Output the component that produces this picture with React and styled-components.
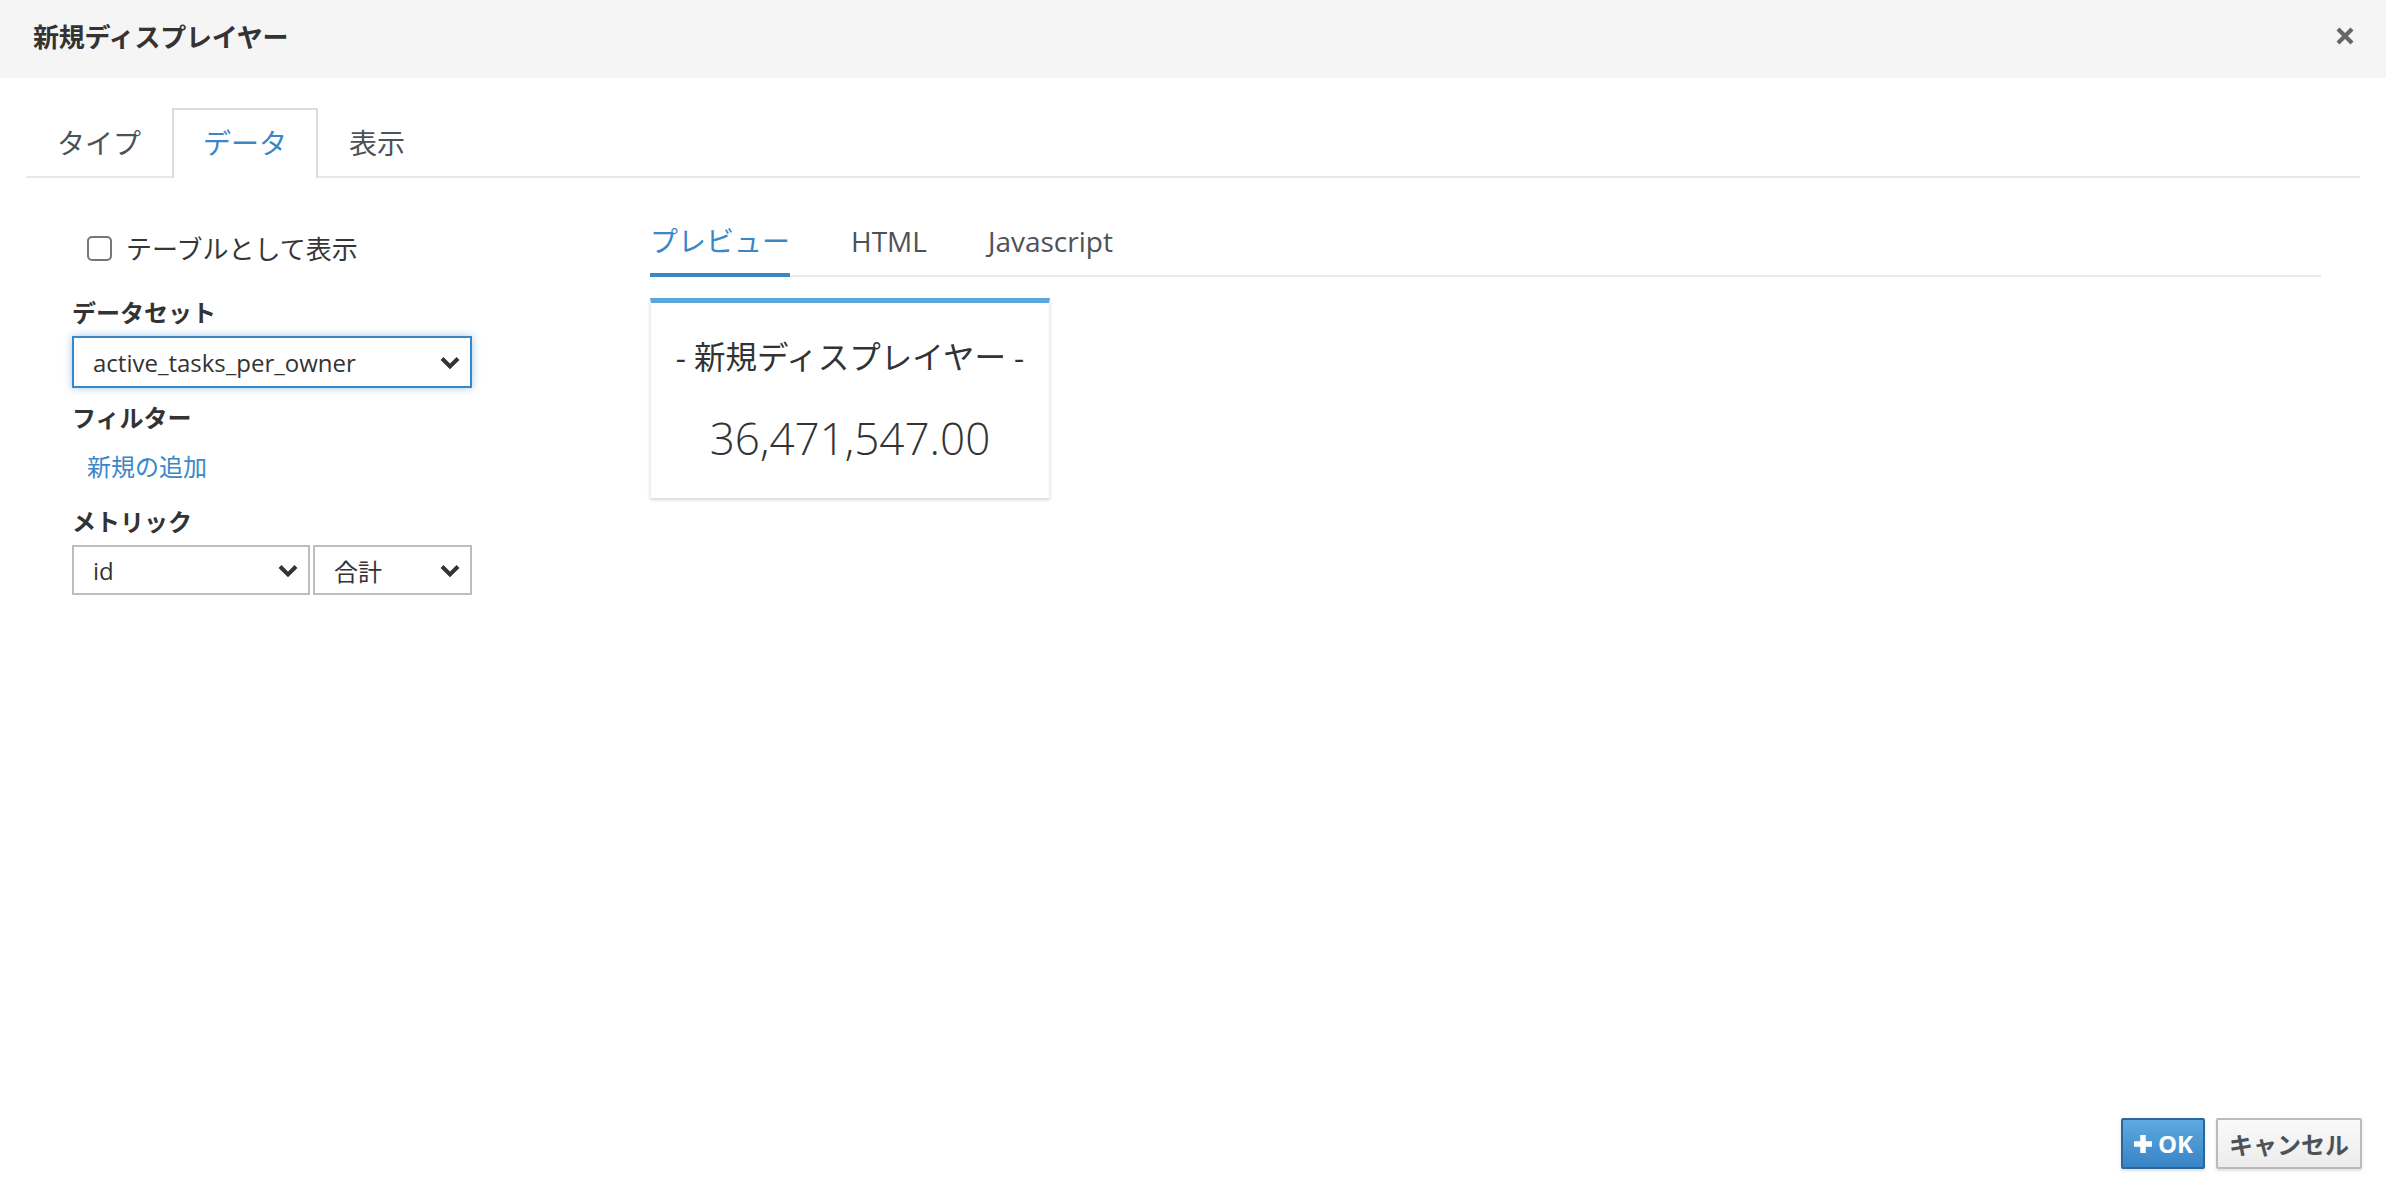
import React from "react";
import styled, { createGlobalStyle } from "styled-components";

const GlobalStyle = createGlobalStyle`
  html, body { margin: 0; padding: 0; background: #fff; }
  body {
    font-family: "Open Sans", "Noto Sans CJK JP", sans-serif;
    color: #333;
  }
  * { box-sizing: border-box; }
`;

const Page = styled.div`
  width: 100%;
  height: 100vh;
  display: flex;
  flex-direction: column;
`;

const Header = styled.div`
  height: 78px;
  background: #f5f5f5;
  display: flex;
  align-items: center;
  justify-content: space-between;
  padding: 0 31px 6px 33px;
`;

const Title = styled.h4`
  margin: 0;
  font-size: 26px;
  font-weight: 700;
  color: #333;
  letter-spacing: -0.2px;
`;

const CloseButton = styled.button`
  border: 0;
  background: transparent;
  padding: 0;
  display: flex;
  cursor: pointer;
`;

const Body = styled.div`
  flex: 1;
  padding: 0 26px;
  display: flex;
  flex-direction: column;
`;

const TabBar = styled.div`
  margin-top: 30px;
  display: flex;
  border-bottom: 2px solid #e7e7e7;
`;

const Tab = styled.div`
  height: 70px;
  margin-bottom: -2px;
  padding: 0 29px 4px;
  border: 2px solid ${(p) => (p.$active ? "#dcdcdc" : "transparent")};
  border-bottom: 0;
  background: ${(p) => (p.$active ? "#fff" : "transparent")};
  display: flex;
  align-items: center;
  font-size: 28px;
  color: ${(p) => (p.$active ? "#3a87c8" : "#4d5258")};
`;

const Content = styled.div`
  display: flex;
  padding-left: 46px;
`;

const LeftCol = styled.div`
  width: 400px;
  display: flex;
  flex-direction: column;
`;

const CheckRow = styled.label`
  margin-top: 50px;
  height: 40px;
  display: flex;
  align-items: center;
  padding-left: 15px;
  font-size: 26px;
  color: #363636;
`;

const CheckBox = styled.span`
  width: 25px;
  height: 25px;
  border: 2px solid #767676;
  border-radius: 5px;
  margin-right: 14px;
  background: #fff;
`;

const FieldLabel = styled.div`
  margin-top: ${(p) => p.$mt}px;
  font-size: 24px;
  line-height: 34px;
  font-weight: 700;
  color: #333;
`;

const SelectBox = styled.div`
  margin-top: 6px;
  width: ${(p) => p.$w}px;
  height: ${(p) => p.$h}px;
  border: 2px solid ${(p) => (p.$focus ? "#3a87c8" : "#bdbdbd")};
  box-shadow: ${(p) =>
    p.$focus ? "0 0 8px rgba(58, 135, 200, 0.45)" : "none"};
  background: #fff;
  display: flex;
  align-items: center;
  justify-content: space-between;
  padding: 0 9px 0 19px;
  font-size: 24px;
  color: #333;
`;

const SelectRow = styled.div`
  margin-top: 6px;
  display: flex;
  gap: 3px;
  & > div { margin-top: 0; }
`;

const Link = styled.a`
  margin-top: 15px;
  padding-left: 15px;
  font-size: 24px;
  line-height: 34px;
  color: #3a87c8;
  text-decoration: none;
`;

const RightCol = styled.div`
  flex: 1;
  margin-left: 178px;
  margin-right: 39px;
  display: flex;
  flex-direction: column;
`;

const SubTabBar = styled.div`
  margin-top: 43px;
  display: flex;
  border-bottom: 2px solid #e9e9e9;
`;

const SubTab = styled.div`
  margin-right: 61px;
  margin-bottom: -2px;
  padding-bottom: 12px;
  border-bottom: 4px solid ${(p) => (p.$active ? "#3a87c8" : "transparent")};
  font-size: 28px;
  line-height: 40px;
  color: ${(p) => (p.$active ? "#3a87c8" : "#4d5258")};
`;

const Card = styled.div`
  margin-top: 21px;
  width: 400px;
  height: 200px;
  border-top: 5px solid #5aa7dc;
  border-left: 1px solid #efefef;
  border-right: 1px solid #efefef;
  box-shadow: 0 2px 3px rgba(0, 0, 0, 0.16);
  background: #fff;
  display: flex;
  flex-direction: column;
  align-items: center;
  padding-top: 32px;
`;

const CardTitle = styled.div`
  font-size: 31.5px;
  line-height: 44px;
  color: #333;
`;

const CardValue = styled.div`
  margin-top: 31px;
  font-size: 44px;
  font-weight: 300;
  line-height: 56px;
  color: #333;
`;

const Footer = styled.div`
  display: flex;
  justify-content: flex-end;
  gap: 11px;
  padding: 0 24px 27px;
`;

const Button = styled.button`
  height: 51px;
  padding: 0 ${(p) => (p.$primary ? 10 : 11)}px;
  border-radius: 2px;
  border: 2px solid ${(p) => (p.$primary ? "#2a679f" : "#bbbbbb")};
  background: ${(p) =>
    p.$primary
      ? "linear-gradient(#5ea9de, #3884c7)"
      : "linear-gradient(#fafafa, #ececec)"};
  color: ${(p) => (p.$primary ? "#fff" : "#4d5258")};
  font-family: "Open Sans", "Noto Sans CJK JP", sans-serif;
  font-size: 24px;
  font-weight: 700;
  display: flex;
  align-items: center;
  gap: 5px;
  box-shadow: 0 2px 3px rgba(0, 0, 0, 0.12);
  cursor: pointer;
`;

const Chevron = () => (
  <svg width="22" height="15" viewBox="0 0 22 15">
    <path d="M3 3.5 L11 11.5 L19 3.5" fill="none" stroke="#333" strokeWidth="4" />
  </svg>
);

const CloseIcon = () => (
  <svg width="20" height="20" viewBox="0 0 20 20">
    <path d="M3 3 L17 17 M17 3 L3 17" stroke="#666" strokeWidth="4.2" />
  </svg>
);

const PlusIcon = () => (
  <svg width="20" height="20" viewBox="0 0 20 20">
    <path d="M10 1 V19 M1 10 H19" stroke="#fff" strokeWidth="5.5" />
  </svg>
);

export default function App() {
  return (
    <Page>
      <GlobalStyle />
      <Header>
        <Title>新規ディスプレイヤー</Title>
        <CloseButton aria-label="close">
          <CloseIcon />
        </CloseButton>
      </Header>
      <Body>
        <TabBar>
          <Tab>タイプ</Tab>
          <Tab $active>データ</Tab>
          <Tab>表示</Tab>
        </TabBar>
        <Content>
          <LeftCol>
            <CheckRow>
              <CheckBox />
              テーブルとして表示
            </CheckRow>
            <FieldLabel $mt={28}>データセット</FieldLabel>
            <SelectBox $w={400} $h={52} $focus>
              <span>active_tasks_per_owner</span>
              <Chevron />
            </SelectBox>
            <FieldLabel $mt={13}>フィルター</FieldLabel>
            <Link href="#">新規の追加</Link>
            <FieldLabel $mt={21}>メトリック</FieldLabel>
            <SelectRow>
              <SelectBox $w={238} $h={50}>
                <span>id</span>
                <Chevron />
              </SelectBox>
              <SelectBox $w={159} $h={50}>
                <span>合計</span>
                <Chevron />
              </SelectBox>
            </SelectRow>
          </LeftCol>
          <RightCol>
            <SubTabBar>
              <SubTab $active>プレビュー</SubTab>
              <SubTab>HTML</SubTab>
              <SubTab>Javascript</SubTab>
            </SubTabBar>
            <Card>
              <CardTitle>- 新規ディスプレイヤー -</CardTitle>
              <CardValue>36,471,547.00</CardValue>
            </Card>
          </RightCol>
        </Content>
      </Body>
      <Footer>
        <Button $primary>
          <PlusIcon />
          OK
        </Button>
        <Button>キャンセル</Button>
      </Footer>
    </Page>
  );
}
